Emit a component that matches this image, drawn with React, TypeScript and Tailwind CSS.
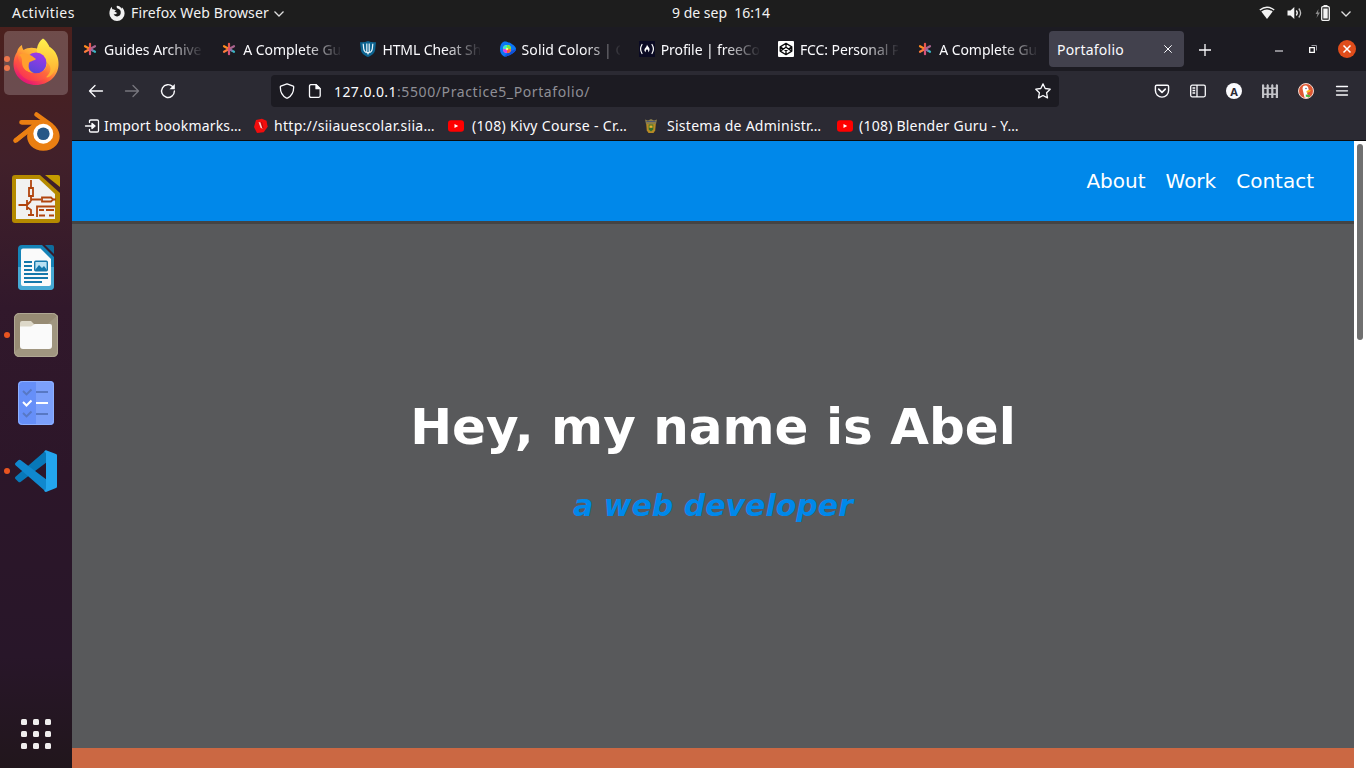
import type { ReactNode } from "react";

const ui = "font-['Noto_Sans','Open_Sans',sans-serif] whitespace-pre";

function Asterisk() {
  return (
    <svg width="16" height="16" viewBox="0 0 16 16" fill="none" strokeWidth="2.2" strokeLinecap="round">
      <path d="M8 8V2.800" stroke="#e8574f" />
      <path d="M8 8L3 5.200" stroke="#ff8a1f" />
      <path d="M8 8L3 10.800" stroke="#fb7a3b" />
      <path d="M8 8V13.200" stroke="#d6537a" />
      <path d="M8 8l5-2.800" stroke="#a9648f" />
      <path d="M10.500 9.400l2.500 1.400" stroke="#39b6c4" />
      <path d="M8 8l2.500 1.400" stroke="#8d6fa8" />
      <circle cx="8" cy="8" r="1.400" fill="#e04f6d" />
    </svg>
  );
}

function Shield() {
  return (
    <svg width="16" height="16" viewBox="0 0 16 16">
      <path d="M0 1.200Q4.500 1.600 8 0q3.500 1.600 8 1.200l-.8 7.500c-.5 3.500-3.700 5.800-7.200 7.300-3.500-1.500-6.700-3.800-7.200-7.300z" fill="#0d6491" />
      <path d="M3.200 2.800l.5 5q.3 3 3 4M12.800 2.800l-.5 5q-.3 3-3 4M6.800 2.500v9M9.200 2.500v9" fill="none" stroke="#e9f4fa" strokeWidth="1.200" />
      <path d="M6.500 11h3L8 14z" fill="#e9f4fa" />
    </svg>
  );
}

function ColorDrop() {
  return (
    <svg width="16" height="16" viewBox="0 0 16 16">
      <path d="M4 .6C7-.5 16 4.500 16 8s-9 8.500-12 7.400C1 14 0 11 0 8S1 2 4 .6z" fill="#0a76f5" />
      <path d="M16 8c0 3.500-9 8.500-12 7.400L9 11z" fill="#1150d8" />
      <circle cx="7" cy="8" r="4" fill="#ffe13a" />
      <path d="M7 8V4a4 4 0 0 0-4 4z" fill="#38e8d0" />
      <path d="M7 8V4a4 4 0 0 1 4 4z" fill="#6ee83c" />
      <path d="M7 8v4a4 4 0 0 1-4-4z" fill="#d83cf0" />
      <path d="M7 8v4a4 4 0 0 0 4-4z" fill="#ff5b32" />
      <circle cx="7" cy="8" r="1.300" fill="#fff27a" />
    </svg>
  );
}

function CampFire() {
  return (
    <svg width="16" height="16" viewBox="0 0 16 16" fill="none" stroke="#fff" strokeLinecap="round">
      <rect width="16" height="16" fill="#0a0a23" stroke="none" />
      <path d="M3 3.500Q.2 8 3 12.500M13 3.500q2.800 4.500 0 9" strokeWidth="1.200" />
      <path d="M8 3.500c.4 2 3 3 2.500 5.500-.2 1.200-.8 2-1.300 2.300.5-1.600-.2-2.300-1.200-3-.8.800-1.700 1.700-1.200 3-1-.4-1.700-1.700-1.300-3C6 6.500 8 6 8 3.500z" fill="#fff" stroke="none" />
    </svg>
  );
}

function CodePen() {
  return (
    <svg width="16" height="16" viewBox="0 0 16 16" fill="none" stroke="#0b0b0d" strokeWidth="1.300" strokeLinejoin="round">
      <rect width="16" height="16" rx="1" fill="#fff" stroke="none" />
      <path d="M8 2.300l5.800 3.600v4.200L8 13.700l-5.800-3.600V5.900zM2.200 5.900L8 9.800l5.800-3.900M2.200 10.100L8 6.200l5.800 3.900M8 2.300v3.900M8 9.800v3.900" />
    </svg>
  );
}

function YouTube() {
  return (
    <svg width="16" height="16" viewBox="0 0 16 16">
      <rect x="0" y="2.300" width="16" height="11.400" rx="3" fill="#f00" />
      <path d="M6.500 5.900v4.200l3.700-2.100z" fill="#fff" />
    </svg>
  );
}

const tabs: { icon: ReactNode; title: string; tracking: string }[] = [
  { icon: <Asterisk />, title: "Guides Archives", tracking: "tracking-[-0.02px]" },
  { icon: <Asterisk />, title: "A Complete Guide", tracking: "tracking-[-0.04px]" },
  { icon: <Shield />, title: "HTML Cheat Sheet", tracking: "tracking-[-0.1px]" },
  { icon: <ColorDrop />, title: "Solid Colors | CSS", tracking: "tracking-[0.1px]" },
  { icon: <CampFire />, title: "Profile | freeCodeCamp", tracking: "tracking-[-0.1px]" },
  { icon: <CodePen />, title: "FCC: Personal Portfolio", tracking: "tracking-[-0.1px]" },
  { icon: <Asterisk />, title: "A Complete Guide", tracking: "tracking-[-0.04px]" },
];

function TopBar() {
  return (
    <header className={`${ui} flex h-[27px] shrink-0 items-center bg-[#1d1d1d] text-[14px] leading-[26px] text-[#f2f2f2]`}>
      <span className="h-[27px] w-[109px] pl-3 tracking-[0.45px]">Activities</span>
      <svg className="-mt-px" width="16" height="17" viewBox="0 0 16 17">
        <path d="M8 .8c-.6.800-.4 1.700.2 2.400C10.800 3.700 12.200 5.800 11.700 8.300a3.700 3.700 0 0 1-7.200.5c.8.700 1.800.700 2.800 0l1-.9C7.300 7.600 6.800 7 5.500 7c.2-.8.800-1.200 1.500-1.600C5.500 4.500 4.200 4.300 3.400 4.200 2.900 3.400 2.800 2.600 2.900 1.800 1.200 3.300.4 6 .4 8.500a7.600 7.600 0 0 0 15.200 0c0-2.500-1-4.800-2.700-6.300l-.1 1.500C11.500 2 10 .9 8 .8z" fill="#f2f2f2" />
      </svg>
      <span className="h-[27px] w-[149px] pl-[6px] tracking-[0.13px]">Firefox Web Browser</span>
      <svg width="10" height="6" viewBox="0 0 10 6" fill="none" stroke="#dedede" strokeWidth="1.300"><path d="M.5.500L5 5 9.500.500" /></svg>
      <span className="ml-[388px] h-[27px] w-[98px]">9 de sep  16:14</span>
      <div className="-mt-px ml-auto flex items-center pr-[15px]">
        <svg width="16" height="14" viewBox="0 0 16 14">
          <path d="M.8 4Q8-1.500 15.200 4" fill="none" stroke="#f2f2f2" strokeWidth="1.500" />
          <path d="M2.300 5.500Q8 1.500 13.700 5.500L8 13z" fill="#f2f2f2" />
        </svg>
        <svg className="ml-[12px]" width="16" height="14" viewBox="0 0 16 14" fill="none" stroke="#f2f2f2" strokeWidth="1.300">
          <path d="M.5 4.500h3L7.300 1v12L3.500 9.500h-3z" fill="#f2f2f2" stroke="none" />
          <path d="M9.300 4.500q2 2.500 0 5" />
          <path d="M11.800 2.500q3.600 4.500 0 9" stroke="#c0c0c0" />
        </svg>
        <svg className="ml-[12px]" width="16" height="16" viewBox="0 0 16 16">
          <path d="M3.500 4L.5 9h2L1.500 13 5 7.500H3z" fill="#8a8a8a" />
          <path d="M8.500 0h4v1.500h-4z" fill="#f2f2f2" />
          <rect x="6.700" y="1.700" width="7.600" height="13.600" rx="1" fill="none" stroke="#f2f2f2" strokeWidth="1.300" />
          <rect x="8.300" y="3.500" width="4.400" height="10" fill="#f2f2f2" />
        </svg>
        <svg className="mt-px ml-[10px]" width="10" height="6" viewBox="0 0 10 6" fill="none" stroke="#dedede" strokeWidth="1.300"><path d="M.5.500L5 5 9.500.500" /></svg>
      </div>
    </header>
  );
}

function FirefoxIcon() {
  return (
    <svg className="-mt-[2px]" width="48" height="48" viewBox="0 0 48 48">
      <defs>
        <linearGradient id="fxBody" x1=".85" y1=".1" x2=".25" y2=".95">
          <stop offset="0" stopColor="#ffe53f" />
          <stop offset=".4" stopColor="#ffa436" />
          <stop offset=".7" stopColor="#ff5040" />
          <stop offset="1" stopColor="#e2127a" />
        </linearGradient>
        <linearGradient id="fxFlame" x1=".6" y1="0" x2=".6" y2="1">
          <stop offset="0" stopColor="#fff14d" />
          <stop offset="1" stopColor="#ffa92e" />
        </linearGradient>
        <linearGradient id="fxGlobe" x1=".7" y1="0" x2=".3" y2="1">
          <stop offset="0" stopColor="#a238e8" />
          <stop offset="1" stopColor="#5546d8" />
        </linearGradient>
        <linearGradient id="fxRim" x1="1" y1=".2" x2=".3" y2=".9">
          <stop offset="0" stopColor="#ffc235" />
          <stop offset=".45" stopColor="#ff6a3c" />
          <stop offset="1" stopColor="#fb3a4e" />
        </linearGradient>
      </defs>
      <path d="M5 14C6 10 8 8 10 7c0 2 .5 3.500 1.500 5C16 9 23 9 28 12l10-3c6 4 9 11 8.500 18C46 38 36.500 47 24 47S1.500 38 1.500 26C1.500 21 3 17 5 14z" fill="url(#fxBody)" />
      <path d="M31 .5c5 3.500 6 8 8 11 3 4 6 9 5 16-1 7-5 11-9 12-5-3-3-10-4-14-2-7-7-9-6-15 .5-4 3-8 6-10z" fill="url(#fxFlame)" />
      <circle cx="24" cy="25" r="10.500" fill="url(#fxGlobe)" />
      <path d="M7 17c5-3 9-1 13 1l4 3c-2 2-6 2-7 4-1 5 0 8 5 10-7 0-12-4-12-11 0-3 0-5-3-7z" fill="#ffa02e" />
      <path d="M5 17c2 5 4 18 18 18.500 8 .3 12-5 12-11 4 3 5 8 1 12.500-3 4-8 6-13 6C11 43 2 32 5 17z" fill="url(#fxRim)" />
    </svg>
  );
}

function BlenderIcon() {
  return (
    <svg width="48" height="48" viewBox="0 0 48 48">
      <g transform="translate(0 2)">
        <path d="M3.500 31.500L18 20.500M9.500 13.200h19M24.500 5.500L39 16" fill="none" stroke="#ea7f12" strokeWidth="4.600" strokeLinecap="round" />
        <path d="M9.500 11h20l3-1L40 14.500c9 6 9.700 16 4 22-6 7-19 7-25 .5-3.500-4-4.500-8.500-3.500-12.500L5 33.500 2 30l18-14.500H9.500z" fill="#ea7f12" />
        <circle cx="31.300" cy="24.800" r="10" fill="#fff" />
        <circle cx="31.300" cy="24.800" r="6.300" fill="#265787" />
      </g>
    </svg>
  );
}

function CircuitIcon() {
  return (
    <svg width="48" height="48" viewBox="0 0 48 48" fill="none">
      <path d="M3 0h25l20 18v27q0 3-3 3H3q-3 0-3-3V3q0-3 3-3z" fill="#b58a00" />
      <path d="M33 0h13q2 0 2 2v10z" fill="#c69c00" />
      <path d="M4 4h23l16 15v25H4z" fill="#f1f1f1" />
      <g stroke="#b1440e" strokeWidth="1.800">
        <path d="M19 5v8M19 21v5M6.500 30H15M15 25v10M15 30l4-4M15 32l4 3v5M16 40h6M19 24.500h10M41 24.500h3M25 42V31.500h18M27 35h5M34 35h8M27 40.500h6M37 40.500h5" />
        <path d="M17 13h4v8h-4zM30 22.500h9l2 2-2 2h-9z" />
      </g>
    </svg>
  );
}

function WriterIcon() {
  return (
    <svg width="36" height="45" viewBox="0 0 36 45" fill="none">
      <path d="M4 0h20l12 12v29q0 4-4 4H4q-4 0-4-4V4q0-4 4-4z" fill="#1583b7" />
      <path d="M0 22h36v19q0 4-4 4H4q-4 0-4-4z" fill="#46a9d4" />
      <path d="M27 0h7q2 0 2 2v7z" fill="#0f6c9d" />
      <path d="M5 3.500h17.500L33 14v25q0 2-2 2H5q-2 0-2-2V5.500q0-2 2-2z" fill="#fafafa" />
      <path d="M6 17h8M6 21h8M6 25h8M6 29h24M6 33h24M6 37h18" stroke="#1478ab" strokeWidth="1.900" />
      <rect x="16.700" y="16.200" width="12.600" height="9.600" rx="1" fill="#b8e0f2" stroke="#1478ab" strokeWidth="1.400" />
      <path d="M17 25l4-5 3 3 2-2 3 4z" fill="#1478ab" />
    </svg>
  );
}

function FilesIcon() {
  return (
    <svg width="46" height="46" viewBox="0 0 46 46">
      <rect x="1" y="1" width="44" height="44" rx="5" fill="#978b74" />
      <path d="M1.500 40L45 3v37q0 5-5 5H6q-4 0-4.500-5z" fill="#a09680" />
      <rect x="1.500" y="1.500" width="43" height="43" rx="5" fill="none" stroke="#b0a894" />
      <path d="M7 11q0-2 2-2h9l3 3h14v12H7z" fill="#ddd8c9" />
      <path d="M7 14.500h11l4-2.500h15q2 0 2 2v20q0 3-3 3H10q-3 0-3-3z" fill="#fafafa" />
    </svg>
  );
}

function TodoIcon() {
  return (
    <svg width="38" height="46" viewBox="0 0 38 46" fill="none">
      <rect x="1" y="1" width="36" height="44" rx="4" fill="#668ff8" />
      <path d="M19 1h14q4 0 4 4v36q0 4-4 4H19z" fill="#7ca0fb" />
      <rect x="1.500" y="1.500" width="35" height="43" rx="4" stroke="#8eb0ff" />
      <path d="M6 11l3.500 3.500L14.500 9.500M6 33l3.500 3.500 5-5M19 12h12M19 34h12" stroke="#5878c4" strokeWidth="1.900" />
      <path d="M6 22l3.500 3.500 5-5M19 23h12" stroke="#fff" strokeWidth="2" />
    </svg>
  );
}

function CodeIcon() {
  return (
    <svg width="42" height="42" viewBox="0 0 42 42">
      <path d="M31 .3v12.500L5.500 32q-1.200.7-2.200-.2L.5 29q-1-1 0-2.200z" fill="#0878b8" />
      <path d="M31 41.700V29.200L5.500 10q-1.200-.7-2.200.2L.5 13q-1 1 0 2.200z" fill="#1088cf" />
      <path d="M31 .3L41 4q1 .4 1 1.500v31q0 1-1 1.500l-10 4q-1.500-.3-2-1.500 1.500 0 2-2v-35q-.5-2-2-2 .8-1 2-1.200z" fill="#23a5ed" />
    </svg>
  );
}

function Dock() {
  const apps: { node: ReactNode; dots: number; active?: boolean }[] = [
    { node: <FirefoxIcon />, dots: 2, active: true },
    { node: <BlenderIcon />, dots: 0 },
    { node: <CircuitIcon />, dots: 0 },
    { node: <WriterIcon />, dots: 0 },
    { node: <FilesIcon />, dots: 1 },
    { node: <TodoIcon />, dots: 0 },
    { node: <CodeIcon />, dots: 1 },
  ];
  return (
    <aside className="flex w-[72px] shrink-0 flex-col justify-between bg-[linear-gradient(180deg,#4b201d_0%,#41202a_18%,#31182b_38%,#2c1629_60%,#281629_85%,#21161c_100%)] pt-[4px] pb-[19px]">
      <div className="flex flex-col gap-1">
        {apps.map((app, i) => (
          <div key={i} className="flex h-16 items-center">
            <div className="flex w-3 flex-col gap-[3px] pl-1">
              {Array.from({ length: app.dots }, (_, d) => (
                <span key={d} className="size-[6px] rounded-full bg-[#e95420]" />
              ))}
            </div>
            <div className={app.active ? "-ml-2 flex size-16 items-center justify-center rounded-[5px] bg-white/20" : "-ml-2 flex size-16 items-center justify-center"}>
              {app.node}
            </div>
          </div>
        ))}
      </div>
      <div className="ml-[21px] grid w-[30px] grid-cols-3 gap-[6px]">
        {Array.from({ length: 9 }, (_, i) => (
          <span key={i} className="size-[6px] rounded-[1.5px] bg-[#f0eeee]" />
        ))}
      </div>
    </aside>
  );
}

function TabStrip() {
  return (
    <div className={`${ui} flex h-11 items-center bg-[#1c1b22] pl-[2px] text-[14px] text-[#fbfbfe]`}>
      {tabs.map((tab, i) => (
        <div key={i} className="flex w-[139.2px] shrink-0 items-center gap-[6px] pl-2">
          <span className="shrink-0">{tab.icon}</span>
          <span className={`w-[98px] overflow-hidden pt-[2px] leading-6 [mask-image:linear-gradient(to_right,#000_62px,transparent_100px)] ${tab.tracking}`}>{tab.title}</span>
        </div>
      ))}
      <div className="ml-[0.6px] flex h-9 w-[135px] shrink-0 items-center justify-between rounded bg-[#42414d] pr-3 pl-2">
        <span className="pt-px tracking-[0.25px]">Portafolio</span>
        <svg width="8" height="8" viewBox="0 0 8 8" stroke="#fbfbfe" strokeWidth="1"><path d="M.3.300l7.400 7.400M7.700.300L.3 7.700" /></svg>
      </div>
      <svg className="mt-px ml-[15.4px] shrink-0" width="12" height="12" viewBox="0 0 12 12" stroke="#fbfbfe" strokeWidth="1.300"><path d="M6 0v12M0 6h12" /></svg>
      <svg className="mt-1 ml-[64px] shrink-0" width="8" height="2" viewBox="0 0 8 2"><path d="M0 .5h8v1H0z" fill="#fbfbfe" /></svg>
      <svg className="ml-[26px] shrink-0" width="8" height="8" viewBox="0 0 8 8" fill="none">
        <path d="M2.500.500h5v5" stroke="#9a9aa2" />
        <path d="M.7 2.700h4.600v4.600H.7z" stroke="#fff" strokeWidth="1.300" />
      </svg>
      <svg className="ml-[21px] shrink-0" width="18" height="18" viewBox="0 0 18 18">
        <circle cx="9" cy="9" r="9" fill="#e04d1b" />
        <path d="M5.500 5.500l7 7M12.500 5.500l-7 7" stroke="#fff" strokeWidth="1.500" />
      </svg>
    </div>
  );
}

function ToolBar() {
  return (
    <div className="flex h-10 items-center pl-4 text-[#fbfbfe]">
      <svg width="16" height="16" viewBox="0 0 16 16" fill="none" stroke="currentColor" strokeWidth="1.300" strokeLinecap="round" strokeLinejoin="round"><path d="M1.500 8h13M7 2.500L1.500 8 7 13.500" /></svg>
      <svg className="ml-5 text-[#77767e]" width="16" height="16" viewBox="0 0 16 16" fill="none" stroke="currentColor" strokeWidth="1.300" strokeLinecap="round" strokeLinejoin="round"><path d="M1.500 8h13M9 2.500L14.500 8 9 13.500" /></svg>
      <svg className="ml-5" width="16" height="16" viewBox="0 0 16 16" fill="none" stroke="currentColor" strokeWidth="1.400" strokeLinecap="round">
        <path d="M12.600 3.600A6.400 6.400 0 1 0 14.400 8" />
        <path d="M14.800 1v5.300H9.500z" fill="currentColor" stroke="none" />
      </svg>
      <div className={`${ui} ml-[95px] flex h-8 w-[788px] items-center rounded bg-[#1c1b22] pr-2 pl-2 text-[14px]`}>
        <svg width="16" height="16" viewBox="0 0 16 16" fill="none" stroke="currentColor" strokeWidth="1.300" strokeLinejoin="round"><path d="M8 .9l6.200 2.300q.5.200.5.800c0 5-2 9-6.200 11.100q-.5.200-1 0C3.300 13 1.300 9 1.300 4q0-.6.500-.8z" /></svg>
        <svg className="ml-3" width="16" height="16" viewBox="0 0 16 16" fill="none" stroke="currentColor" strokeWidth="1.300" strokeLinejoin="round">
          <path d="M3.500 1.700h5.700l4 4v7.100q0 1.500-1.500 1.500H4q-1.500 0-1.500-1.500V3.200q0-1.500 1.500-1.500z" />
          <path d="M9 1.700v4h4z" fill="currentColor" />
        </svg>
        <span className="ml-[11px] w-[63px] tracking-[0.4px]">127.0.0.1</span>
        <span className="tracking-[0.6px] text-[#8f8f96]">:5500/Practice5_Portafolio/</span>
        <svg className="ml-auto" width="16" height="16" viewBox="0 0 16 16" fill="none" stroke="currentColor" strokeWidth="1.300" strokeLinejoin="round"><path d="M8 .9l2.200 4.600 5 .7-3.600 3.600.9 5.100L8 12.500l-4.500 2.400.9-5.100L.8 6.200l5-.7z" /></svg>
      </div>
      <div className="ml-[95px] flex items-center gap-5">
        <svg width="16" height="16" viewBox="0 0 16 16" fill="none" stroke="currentColor" strokeWidth="1.400" strokeLinecap="round" strokeLinejoin="round">
          <path d="M2.700 2.200h10.600q1.300 0 1.300 1.300v4a6.600 6.600 0 0 1-13.200 0v-4q0-1.300 1.300-1.300z" />
          <path d="M4.700 6.200L8 9.400l3.300-3.200" strokeWidth="1.700" />
        </svg>
        <svg width="16" height="16" viewBox="0 0 16 16" fill="none" stroke="currentColor" strokeWidth="1.300">
          <rect x=".7" y="2.200" width="14.600" height="11.600" rx="1.500" />
          <path d="M7 2v12M2.500 5h2.700M2.500 7.500h2.700M2.500 10h2.700" />
        </svg>
        <div className="flex size-4 items-center justify-center rounded-full bg-[#fbfbfe] font-['Noto_Sans',sans-serif] text-[11px] leading-none font-bold text-[#2b2a33]">A</div>
        <svg width="16" height="16" viewBox="0 0 16 16" fill="#c4c4c9">
          <path d="M0 2l1-1 1.200 1v13H0zM4.600 2l1-1 1.200 1v13H4.600zM9.200 2l1-1 1.200 1v13H9.200zM13.800 2l1-1L16 2v13h-2.200zM0 4.500h16V6H0zM0 10.500h16V12H0z" />
        </svg>
        <svg width="16" height="16" viewBox="0 0 16 16">
          <circle cx="8" cy="8" r="7.500" fill="#de5833" stroke="#f2d8d0" />
          <path d="M5 3.500Q8 1.500 10 4l.8 3-1.800 3 1.500 4.500q-2 .8-4 0L5 8Q4 5 5 3.500z" fill="#fff" />
          <path d="M8.500 8q3-1.500 4.500-.5-1.500 2.300-4.500 2z" fill="#fdb914" />
          <path d="M7.800 11.500l4 .5v2.200l-4-.5z" fill="#4cba3c" />
          <circle cx="8" cy="5.500" r=".7" fill="#234a80" />
        </svg>
        <svg width="16" height="16" viewBox="0 0 16 16" stroke="currentColor" strokeWidth="1.300" strokeLinecap="round"><path d="M2.500 3.500h11M2.500 7.800h11M2.500 12h11" /></svg>
      </div>
    </div>
  );
}

function Bookmarks() {
  return (
    <div className={`${ui} flex h-[29px] items-center pl-3 text-[14px] leading-[29px] text-[#fbfbfe]`}>
      <svg width="16" height="16" viewBox="0 0 16 16" fill="none" stroke="currentColor" strokeWidth="1.300" strokeLinecap="round" strokeLinejoin="round">
        <path d="M5.500 4.500V3.300q0-1.300 1.300-1.300h6.400q1.300 0 1.300 1.300v9.400q0 1.300-1.300 1.300H6.800q-1.300 0-1.300-1.300v-1.200M1.500 8h7" />
        <path d="M8 5.500L11 8l-3 2.500z" fill="currentColor" />
      </svg>
      <span className="ml-1 w-[149px] tracking-[0.18px]">Import bookmarks…</span>
      <svg width="16" height="16" viewBox="0 0 16 16">
        <path d="M3 2l6-1.200 4.500 2 1.200 6-4 5.500L4 15 1 9z" fill="#f10d0d" />
        <path d="M5.500 4l2 .5 2 6.500-2-1.500z" fill="#f8c9c9" />
        <path d="M8.500 4l1.500 6" stroke="#a00a0a" strokeWidth=".8" />
      </svg>
      <span className="ml-[5px] w-[174px] tracking-[0.3px]">http://siiauescolar.siia…</span>
      <YouTube />
      <span className="ml-2 w-[171px] tracking-[0.32px]">(108) Kivy Course - Cr…</span>
      <svg width="16" height="16" viewBox="0 0 16 16">
        <path d="M2 1.500l3 1 3-1.500 3 1.500 3-1-1 4.500H3z" fill="#8a7d4c" />
        <path d="M3.200 6h9.600l-.6 6.500L10.500 15h-5l-1.700-2.500z" fill="#b68a25" />
        <path d="M5.700 6.500h4.600v5L8 13.500l-2.300-2z" fill="#33702d" />
        <path d="M6.500 7.500h3v2.300h-3z" fill="#f0b22b" />
        <path d="M3.500 3.500h9" stroke="#4a5877" />
      </svg>
      <span className="ml-2 w-[170px] tracking-[0.27px]">Sistema de Administr…</span>
      <YouTube />
      <span className="ml-[6px] tracking-[0.23px]">(108) Blender Guru - Y…</span>
    </div>
  );
}

function Page() {
  return (
    <div className="flex min-h-0 flex-1 font-['DejaVu_Sans',sans-serif]">
      <main className="flex flex-1 flex-col">
        <nav className="flex h-[83px] shrink-0 items-center justify-end gap-5 border-b-[3px] border-[#444444] bg-[#0088ea] pr-10 text-[20px] text-white">
          <a>About</a>
          <a>Work</a>
          <a>Contact</a>
        </nav>
        <section className="flex h-[524px] shrink-0 flex-col items-center bg-[#58595b] pt-[173px]">
          <h1 className="text-[50px] leading-[60px] font-bold text-white">Hey, my name is Abel</h1>
          <h2 className="mt-[31px] text-[30px] leading-[36px] font-bold text-[#0088ea] italic">a web developer</h2>
        </section>
        <section className="flex-1 bg-[#cb6843]" />
      </main>
      <div className="flex w-3 justify-center bg-white pt-[3px]">
        <div className="h-[196px] w-[6px] rounded-full bg-[#707070]" />
      </div>
    </div>
  );
}

export default function App() {
  return (
    <div className="flex h-[768px] w-[1366px] flex-col overflow-hidden">
      <TopBar />
      <div className="flex min-h-0 flex-1">
        <Dock />
        <div className="flex min-w-0 flex-1 flex-col">
          <TabStrip />
          <div className="h-[70px] shrink-0 border-b border-[#0c0c0d] bg-[#2b2a33]">
            <ToolBar />
            <Bookmarks />
          </div>
          <Page />
        </div>
      </div>
    </div>
  );
}
